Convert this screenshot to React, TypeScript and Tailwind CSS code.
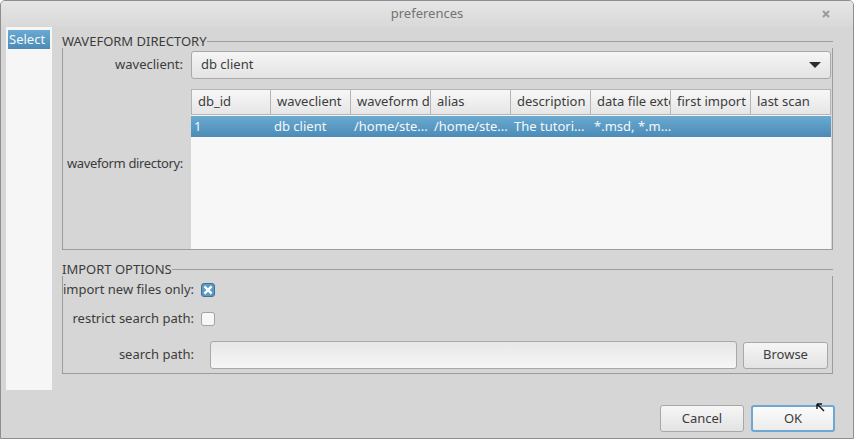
import React from 'react';

const columns = [
  'db_id',
  'waveclient',
  'waveform directory',
  'alias',
  'description',
  'data file extension',
  'first import',
  'last scan',
];

const row = ['1', 'db client', '/home/ste...', '/home/ste...', 'The tutori...', '*.msd, *.m...', '', ''];

const GroupTitle: React.FC<{ title: string }> = ({ title }) => (
  <div className="flex h-[14px] items-center">
    <span className="leading-none">{title}</span>
    <div className="h-px flex-1 bg-[#9c9c9c]" />
  </div>
);

const Checkbox: React.FC<{ checked?: boolean }> = ({ checked }) =>
  checked ? (
    <svg width="14" height="14" viewBox="0 0 14 14">
      <rect x="0.5" y="0.5" width="13" height="13" rx="2.5" fill="#5b9bc6" stroke="#3f7195" />
      <path d="M4.3 4.3 L9.7 9.7 M9.7 4.3 L4.3 9.7" stroke="#fff" strokeWidth="2.4" strokeLinecap="square" />
    </svg>
  ) : (
    <div className="h-[14px] w-[14px] rounded-[3px] border border-[#a3a3a3] bg-[#f7f7f7]" />
  );

const Button: React.FC<{ children: React.ReactNode; primary?: boolean; className?: string }> = ({
  children,
  primary,
  className = '',
}) => (
  <button
    className={`flex items-center justify-center rounded-[3px] bg-linear-to-b from-[#f6f6f6] to-[#e3e3e3] text-[#3c3c3c] ${
      primary ? 'border-2 border-[#6fa7d2] from-[#fbfbfb] to-[#ececec]' : 'border border-[#a8a8a8]'
    } ${className}`}
  >
    {children}
  </button>
);

export default function App() {
  return (
    <div className="relative flex h-[439px] w-[854px] flex-col overflow-hidden rounded-t-[5px] border border-[#8e8e8e] bg-[#d6d6d6] font-['Noto_Sans','DejaVu_Sans',sans-serif] text-[13px] text-[#3c3c3c]">
      {/* title bar */}
      <div className="relative flex h-[26px] shrink-0 items-center justify-center bg-linear-to-b from-[#e6e6e6] to-[#d8d8d8]">
        <span className="text-[#737373]">preferences</span>
        <svg className="absolute right-[23px] top-[9px]" width="8" height="8" viewBox="0 0 8 8">
          <path d="M1 1 L7 7 M7 1 L1 7" stroke="#9a9a9a" strokeWidth="2" />
        </svg>
      </div>

      {/* content */}
      <div className="flex h-[363px] shrink-0">
        <div className="ml-[5px] w-[46px] bg-[#f6f6f6] pt-[3px]">
          <div className="mx-[2px] flex h-[19px] items-center bg-linear-to-b from-[#6aa9d0] to-[#4b8bb6] pl-[1px] text-[#f4f8fb]">
            Select
          </div>
        </div>

        <div className="ml-[10px] flex w-[771px] flex-col pt-[7px]">
          {/* waveform directory group */}
          <GroupTitle title="WAVEFORM DIRECTORY" />
          <div className="grid grid-cols-[128px_1fr] border-x border-b border-[#9c9c9c] pr-[1px] pt-[3px]">
            <div className="flex h-[28px] items-center justify-end pr-[8px]">waveclient:</div>
            <div className="flex h-[28px] items-center justify-between rounded-[3px] border border-[#a8a8a8] bg-linear-to-b from-[#f5f5f5] to-[#e3e3e3] pl-[9px] pr-[9px]">
              <span>db client</span>
              <svg width="12" height="7" viewBox="0 0 12 7">
                <path d="M0 0 H12 L6 6 Z" fill="#2e2e2e" />
              </svg>
            </div>

            <div className="flex items-center justify-end whitespace-nowrap pr-[8px] tracking-[-0.35px]">
              waveform directory:
            </div>
            <div className="mt-[10px] h-[160px] bg-[#f7f7f7]">
              <div className="flex h-[26px] border-b border-[#b5b5b5]">
                {columns.map((c) => (
                  <div
                    key={c}
                    className="flex w-[80px] shrink-0 items-center overflow-hidden whitespace-nowrap border-r border-t border-[#b5b5b5] bg-linear-to-b from-[#f7f7f7] to-[#e6e6e6] pl-[6px] first:border-l"
                  >
                    {c}
                  </div>
                ))}
              </div>
              <div className="mt-[1px] flex h-[21px] bg-linear-to-b from-[#6aa9d0] to-[#4b8bb6] text-[#f4f8fb]">
                {row.map((c, i) => (
                  <div key={i} className="flex w-[80px] shrink-0 items-center overflow-hidden whitespace-nowrap pl-[3px]">
                    {c}
                  </div>
                ))}
              </div>
            </div>
          </div>

          {/* import options group */}
          <div className="mt-[12px]">
            <GroupTitle title="IMPORT OPTIONS" />
          </div>
          <div className="flex flex-col border-x border-b border-[#9c9c9c] pb-[4px] pt-[3px]">
            <div className="flex h-[22px] items-center">
              <div className="w-[131px] whitespace-nowrap text-right">import new files only:</div>
              <div className="ml-[7px]">
                <Checkbox checked />
              </div>
            </div>
            <div className="mt-[7px] flex h-[22px] items-center">
              <div className="w-[131px] whitespace-nowrap text-right">restrict search path:</div>
              <div className="ml-[7px]">
                <Checkbox />
              </div>
            </div>
            <div className="mt-[11px] flex h-[28px] items-center pr-[4px]">
              <div className="w-[131px] whitespace-nowrap text-right">search path:</div>
              <div className="ml-[16px] h-[28px] w-[527px] rounded-[3px] border border-[#a8a8a8] bg-linear-to-b from-[#e7e7e7] to-[#f6f6f6]" />
              <Button className="ml-[6px] h-[27px] w-[85px]">Browse</Button>
            </div>
          </div>
        </div>
      </div>

      {/* dialog buttons */}
      <div className="flex justify-end gap-[7px] pr-[18px] pt-[15px]">
        <Button className="h-[27px] w-[84px]">Cancel</Button>
        <Button primary className="h-[27px] w-[84px]">
          OK
        </Button>
      </div>

      {/* mouse pointer */}
      <svg className="absolute left-[815px] top-[402px]" width="10" height="10" viewBox="0 0 10 10">
        <path d="M1 1 L1 6 M1 1 L6 1 M1 1 L8 8" stroke="#111" strokeWidth="1.4" fill="none" />
      </svg>
    </div>
  );
}
